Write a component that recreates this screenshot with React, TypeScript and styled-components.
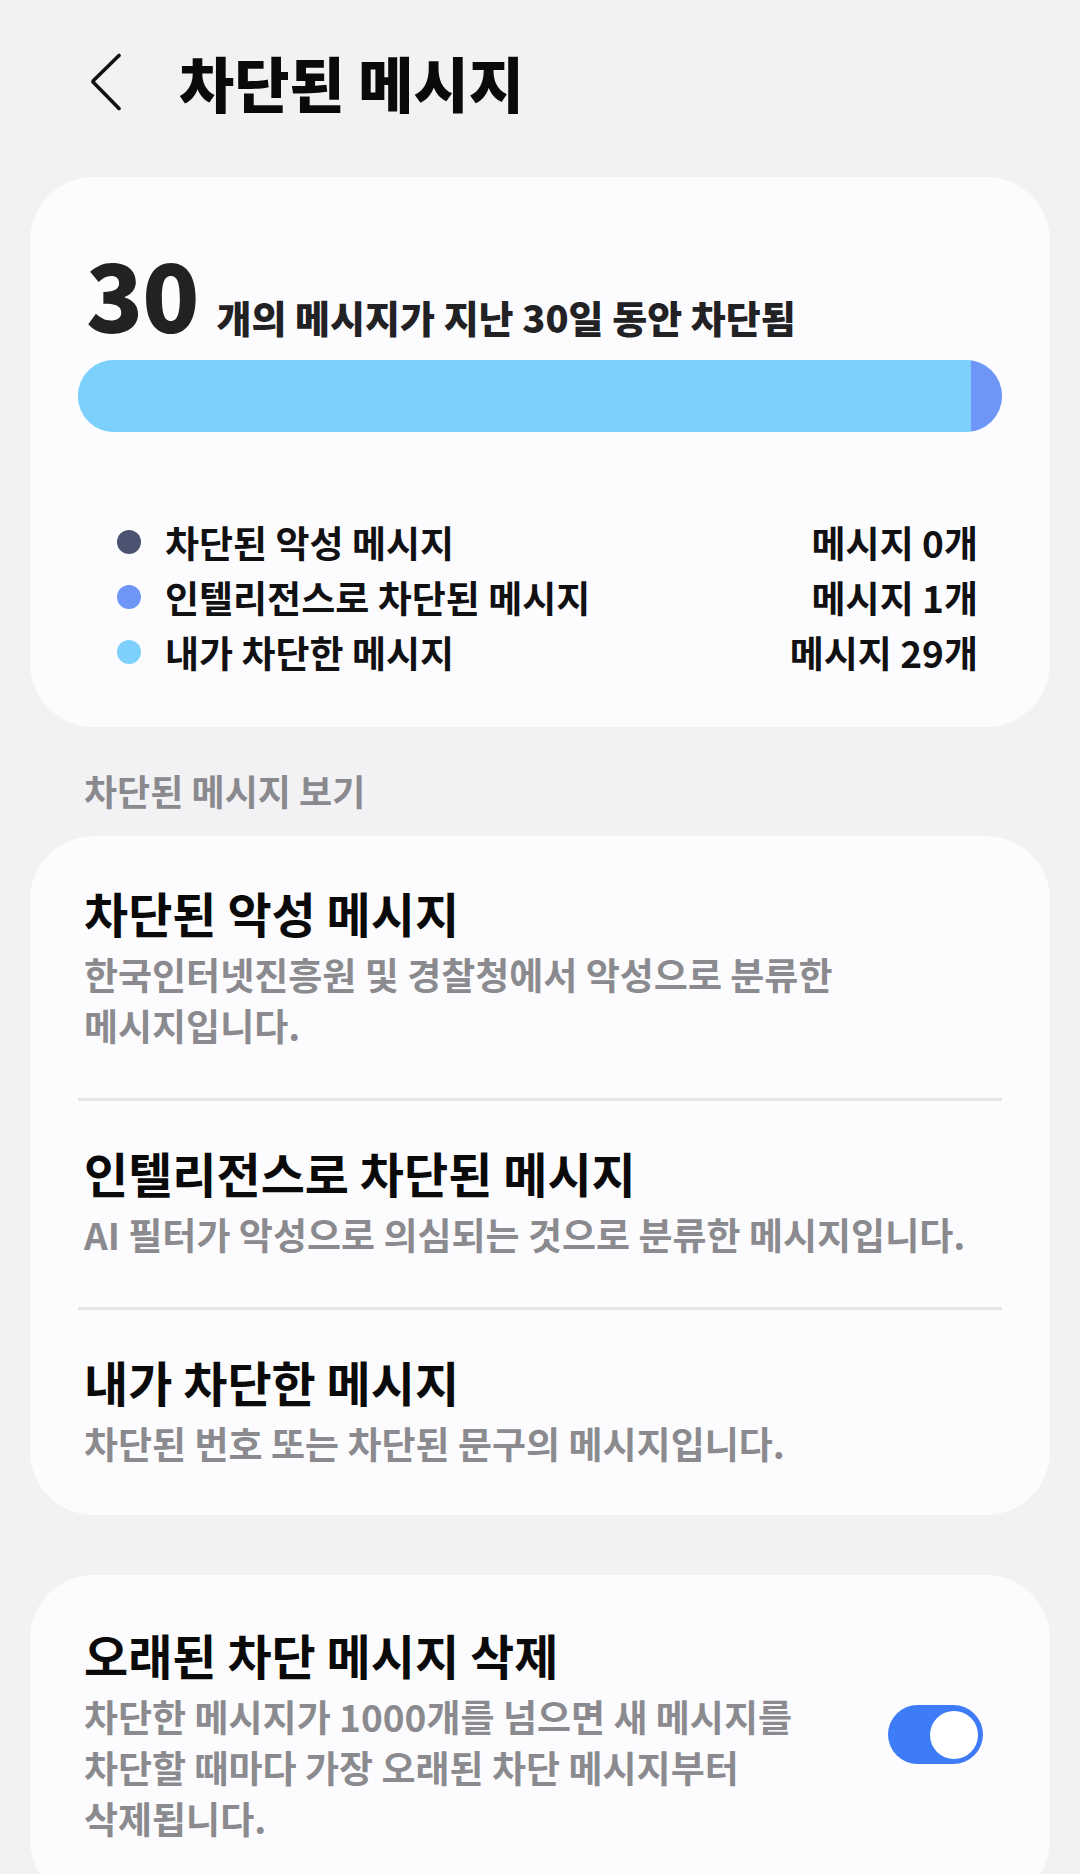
import React from "react";
import styled, { createGlobalStyle } from "styled-components";

const GlobalStyle = createGlobalStyle`
  html, body {
    margin: 0;
    padding: 0;
    background: #f2f2f4;
  }
  body {
    font-family: "Noto Sans CJK KR", "Noto Sans", sans-serif;
    -webkit-font-smoothing: antialiased;
  }
  * { box-sizing: border-box; }
`;

const Page = styled.div`
  width: 1080px;
  min-height: 1874px;
  background: #f2f2f4;
  padding: 0 30px;
  overflow: hidden;
`;

const TopBar = styled.header`
  height: 164px;
  display: flex;
  align-items: center;
  padding-left: 59px;
`;

const BackButton = styled.button`
  border: none;
  background: transparent;
  padding: 0;
  width: 34px;
  height: 58px;
  display: flex;
  align-items: center;
  justify-content: center;
  cursor: pointer;
`;

const PageTitle = styled.h1`
  margin: 0 0 0 56px;
  font-size: 60px;
  font-weight: 900;
  line-height: 1.2;
  color: #0a0a0a;
`;

const Card = styled.section<{ $pad: string }>`
  background: #fcfcfe;
  border-radius: 64px;
  padding: ${(p) => p.$pad};
`;

const CountRow = styled.div`
  display: flex;
  align-items: baseline;
  padding-left: 8px;
`;

const BigNumber = styled.span`
  font-size: 94px;
  font-weight: 900;
  line-height: 94px;
  color: #222224;
  letter-spacing: -1px;
`;

const CountText = styled.span`
  margin-left: 18px;
  font-size: 38px;
  font-weight: 900;
  color: #222224;
`;

const Bar = styled.div`
  margin-top: 16px;
  height: 72px;
  border-radius: 36px;
  overflow: hidden;
  display: flex;
  background: #7ed0fc;
`;

const BarSegment = styled.div<{ $color: string }>`
  height: 100%;
  background: ${(p) => p.$color};
`;

const Legend = styled.ul`
  list-style: none;
  margin: 82px 0 0;
  padding: 0 24px 0 39px;
`;

const LegendRow = styled.li`
  display: flex;
  align-items: center;
  height: 55px;
`;

const Dot = styled.span<{ $color: string }>`
  width: 24px;
  height: 24px;
  border-radius: 50%;
  background: ${(p) => p.$color};
  margin-right: 24px;
  flex-shrink: 0;
`;

const LegendLabel = styled.span`
  font-size: 37px;
  font-weight: 700;
  color: #111113;
  flex: 1;
`;

const LegendCount = styled.span`
  font-size: 37px;
  font-weight: 700;
  color: #111113;
`;

const SectionLabel = styled.h2`
  margin: 0;
  padding: 41px 0 24px 54px;
  font-size: 36px;
  line-height: 44px;
  font-weight: 700;
  color: #8a8a8e;
`;

const Item = styled.div`
  padding: 42px 6px 47px;
  & + & {
    border-top: 3px solid #e4e4e7;
  }
  &:first-child {
    padding-top: 47px;
  }
  &:last-child {
    padding-bottom: 46px;
  }
`;

const ItemTitle = styled.div`
  font-size: 48px;
  line-height: 58px;
  font-weight: 700;
  color: #0a0a0a;
`;

const ItemDesc = styled.div`
  margin-top: 8px;
  font-size: 37px;
  line-height: 51px;
  font-weight: 700;
  color: #8b8b8f;
  word-break: keep-all;
`;

const Spacer = styled.div`
  height: 60px;
`;

const SwitchRow = styled.div`
  display: flex;
  align-items: center;
`;

const SwitchText = styled.div`
  max-width: 770px;
  flex: 1;
`;

const Toggle = styled.button<{ $on: boolean }>`
  margin-left: auto;
  width: 95px;
  height: 59px;
  border-radius: 30px;
  border: none;
  padding: 5px 5px;
  background: ${(p) => (p.$on ? "#3d7bf7" : "#b0b0b4")};
  display: flex;
  align-items: center;
  justify-content: ${(p) => (p.$on ? "flex-end" : "flex-start")};
  cursor: pointer;
  flex-shrink: 0;
`;

const Knob = styled.span`
  width: 48px;
  height: 48px;
  border-radius: 50%;
  background: #ffffff;
`;

const stats = [
  { label: "차단된 악성 메시지", count: 0, color: "#4a5470" },
  { label: "인텔리전스로 차단된 메시지", count: 1, color: "#6e96f7" },
  { label: "내가 차단한 메시지", count: 29, color: "#7ed0fc" },
];

const items = [
  {
    title: "차단된 악성 메시지",
    desc: "한국인터넷진흥원 및 경찰청에서 악성으로 분류한 메시지입니다.",
  },
  {
    title: "인텔리전스로 차단된 메시지",
    desc: "AI 필터가 악성으로 의심되는 것으로 분류한 메시지입니다.",
  },
  {
    title: "내가 차단한 메시지",
    desc: "차단된 번호 또는 차단된 문구의 메시지입니다.",
  },
];

export default function App() {
  const [on, setOn] = React.useState(true);
  const total = stats.reduce((s, x) => s + x.count, 0);
  const barOrder = [stats[2], stats[1], stats[0]];

  return (
    <>
      <GlobalStyle />
      <Page>
        <TopBar>
          <BackButton aria-label="뒤로">
            <svg width="32" height="58" viewBox="0 0 32 58" fill="none">
              <path
                d="M29 2.5 L3.5 27.5 Q2.5 28.5 3.5 29.5 L29 55.5"
                stroke="#111"
                strokeWidth="3.6"
                strokeLinecap="round"
                strokeLinejoin="round"
              />
            </svg>
          </BackButton>
          <PageTitle>차단된 메시지</PageTitle>
        </TopBar>

        <Card $pad="68px 48px 48px" style={{ marginTop: 13 }}>
          <CountRow>
            <BigNumber>{total}</BigNumber>
            <CountText>개의 메시지가 지난 30일 동안 차단됨</CountText>
          </CountRow>
          <Bar>
            {barOrder.map((s) => (
              <BarSegment
                key={s.label}
                $color={s.color}
                style={{ width: `${(s.count / total) * 100}%` }}
              />
            ))}
          </Bar>
          <Legend>
            {stats.map((s) => (
              <LegendRow key={s.label}>
                <Dot $color={s.color} />
                <LegendLabel>{s.label}</LegendLabel>
                <LegendCount>메시지 {s.count}개</LegendCount>
              </LegendRow>
            ))}
          </Legend>
        </Card>

        <SectionLabel>차단된 메시지 보기</SectionLabel>

        <Card $pad="0 48px">
          {items.map((it) => (
            <Item key={it.title}>
              <ItemTitle>{it.title}</ItemTitle>
              <ItemDesc>{it.desc}</ItemDesc>
            </Item>
          ))}
        </Card>

        <Spacer />

        <Card $pad="50px 67px 60px 54px">
          <SwitchRow>
            <SwitchText>
              <ItemTitle>오래된 차단 메시지 삭제</ItemTitle>
              <ItemDesc>
                차단한 메시지가 1000개를 넘으면 새 메시지를 차단할 때마다 가장
                오래된 차단 메시지부터 삭제됩니다.
              </ItemDesc>
            </SwitchText>
            <Toggle $on={on} onClick={() => setOn(!on)} aria-label="toggle">
              <Knob />
            </Toggle>
          </SwitchRow>
        </Card>
      </Page>
    </>
  );
}
